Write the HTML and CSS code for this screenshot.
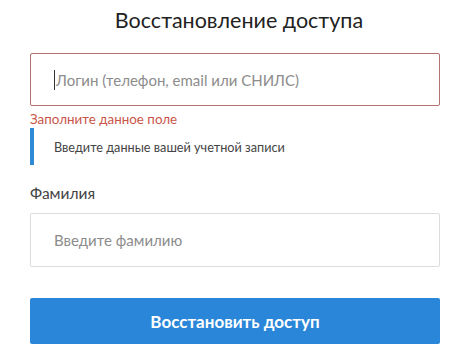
FILE: index.html
```html
<!DOCTYPE html>
<html lang="ru">
<head>
    <meta charset="UTF-8">
    <meta name="viewport" content="width=device-width, initial-scale=1.0">
    <title>Восстановление доступа</title>
    <link rel="stylesheet" href="styles.css">
</head>
<body>
    <div class="recovery">
        <h1 class="title">Восстановление доступа</h1>
        <div class="field field-error">
            <span class="caret"></span>
            <span class="placeholder">Логин (телефон, email или СНИЛС)</span>
        </div>
        <div class="error-text">Заполните данное поле</div>
        <div class="hint">Введите данные вашей учетной записи</div>
        <label class="label">Фамилия</label>
        <div class="field">
            <span class="placeholder">Введите фамилию</span>
        </div>
        <button class="submit">Восстановить доступ</button>
    </div>
</body>
</html>
```
FILE: styles.css
```css
body {
    margin: 0;
    background: #fff;
    font-family: Lato, "Open Sans", sans-serif;
    color: #333;
}
.recovery {
    width: 410px;
    margin-left: 30px;
    padding-top: 6px;
    display: flex;
    flex-direction: column;
}
.title {
    margin: 0 0 19px;
    padding-left: 8px;
    font-size: 21.5px;
    font-weight: 400;
    color: #222;
    text-align: center;
    line-height: 28px;
}
.field {
    height: 54px;
    box-sizing: border-box;
    border: 1px solid #dcdcdc;
    border-radius: 2px;
    display: flex;
    align-items: center;
    padding-left: 23px;
}
.field-error {
    border-color: #b27272;
    height: 53px;
}
.caret {
    width: 1px;
    height: 20px;
    background: #333;
    margin-right: 1px;
}
.placeholder {
    font-size: 15px;
    color: #8c8c8c;
}
.error-text {
    margin-top: 5px;
    font-size: 13.4px;
    color: #c9554a;
    line-height: 16px;
}
.hint {
    margin-top: 1px;
    border-left: 4px solid #2f8ad6;
    height: 37px;
    display: flex;
    align-items: center;
    padding-left: 20px;
    font-size: 12.7px;
    color: #444;
}
.label {
    margin-top: 18px;
    font-size: 15.5px;
    color: #444;
    line-height: 20px;
    margin-bottom: 10px;
}
.submit {
    margin-top: 31px;
    height: 46px;
    border: none;
    border-radius: 2px;
    background: #2a86d8;
    color: #fff;
    font-family: Lato, "Open Sans", sans-serif;
    font-size: 17px;
    font-weight: 700;
}
```
